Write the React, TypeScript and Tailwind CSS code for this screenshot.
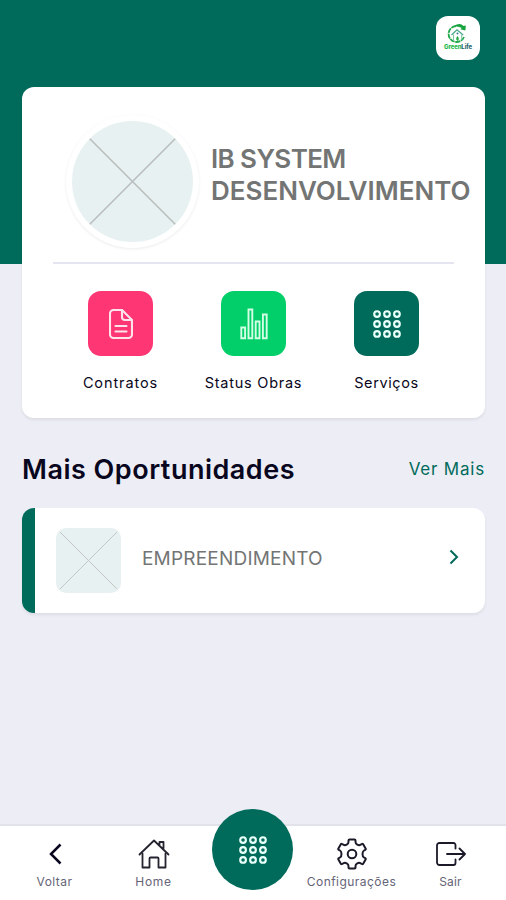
import React from 'react';

function DotsIcon() {
  const steps = [4, 13.8, 23.6];
  return (
    <svg width="28" height="28" viewBox="0 0 27.6 27.6" fill="none" stroke="#e9fffa" strokeWidth="2.1">
      {steps.map((y) => steps.map((x) => <circle key={`${x}-${y}`} cx={x} cy={y} r="2.8" />))}
    </svg>
  );
}

function DocumentIcon() {
  return (
    <svg width="24" height="30" viewBox="0 0 24 30" fill="none" stroke="#ffe3ec" strokeWidth="2.1" strokeLinejoin="round" strokeLinecap="round">
      <path d="M4.5 1H13l10 10v14.5a3.5 3.5 0 0 1-3.5 3.5h-15A3.5 3.5 0 0 1 1 25.5v-21A3.5 3.5 0 0 1 4.5 1Z" />
      <path d="M13 1v7a3 3 0 0 0 3 3h7M6.5 17h11M6.5 22.5h11" />
    </svg>
  );
}

function BarsIcon() {
  return (
    <svg width="28" height="32" viewBox="0 0 28 32" fill="none" stroke="#d2ffe5" strokeWidth="1.9">
      <path d="M1.3 19.5h3.8v10.7H1.3ZM8.5 1.5h3.8v28.7H8.5ZM15.7 13.5h3.8v16.7h-3.8ZM22.9 6.5h3.8v23.7h-3.8Z" />
    </svg>
  );
}

function HomeIcon() {
  return (
    <svg width="32" height="30" viewBox="0 0 32 30" fill="none" stroke="#25232f" strokeWidth="1.8" strokeLinejoin="round" strokeLinecap="round">
      <path d="M1.5 15.5 16 1.5l14.5 14M21.500 5.500V3H25.500v6.500" />
      <path d="M4.5 14.5v14h7v-9a1 1 0 0 1 1-1h7a1 1 0 0 1 1 1v9h7v-14" />
    </svg>
  );
}

function GearIcon() {
  return (
    <svg width="30" height="32" viewBox="0 0 30 32" fill="none" stroke="#1c1a29" strokeWidth="2" strokeLinejoin="round">
      <path d="M12.500 1.500h5q1 0 1 1v1.500q0 1.800 1.800 2.700t3.400 0l1.200-.7q.9-.5 1.400.4l2.300 4q.5.900-.4 1.400l-1.200.7q-1.500.9-1.500 3.500t1.500 3.500l1.200.7q.9.500.4 1.400l-2.300 4q-.5.900-1.400.4l-1.200-.7q-1.600-.9-3.400 0t-1.800 2.700v1.500q0 1-1 1h-5q-1 0-1-1v-1.500q0-1.800-1.800-2.700t-3.400 0l-1.200.7q-.9.500-1.400-.4l-2.300-4q-.5-.9.4-1.400l1.200-.7q1.500-.9 1.500-3.500t-1.500-3.500l-1.200-.7q-.9-.5-.4-1.400l2.300-4q.5-.9 1.400-.4l1.200.7q1.600.9 3.400 0t1.800-2.700v-1.500q0-1 1-1Z" />
      <circle cx="15" cy="16" r="4.3" />
    </svg>
  );
}

function ExitIcon() {
  return (
    <svg width="30" height="24" viewBox="0 0 30 24" fill="none" stroke="#1c1a29" strokeWidth="1.8" strokeLinejoin="round" strokeLinecap="round">
      <path d="M19.5 6.5V3a2 2 0 0 0-2-2h-14A2.5 2.5 0 0 0 1 3.5v17A2.5 2.5 0 0 0 3.5 23h14a2 2 0 0 0 2-2v-3.500" />
      <path d="M11 12h17.500M23.500 6.500 29 12l-5.500 5.500" />
    </svg>
  );
}

function Placeholder({ className, inset }: { className: string; inset: number }) {
  return (
    <div className={className}>
      <svg className="h-full w-full" viewBox="0 0 100 100" fill="none" stroke="#babfbe" strokeWidth="1.3">
        <path d={`M${inset} ${inset}L${100 - inset} ${100 - inset}M${100 - inset} ${inset}L${inset} ${100 - inset}`} />
      </svg>
    </div>
  );
}

function Logo() {
  return (
    <div className="flex h-11 w-11 flex-col items-center rounded-xl bg-white pt-[7px]">
      <svg width="24" height="20" viewBox="0 0 24 20" fill="none">
        <path d="M10 3A8 8 0 1 0 18 14" stroke="#20a94a" strokeWidth="1.8" strokeDasharray="5 .7" />
        <path d="M8 3.2c4-3 7-2.8 9.5-.2l2.3-.6-.4 5.2-5.2-1.4 1.6-1.3C13.5 3.5 11 3.5 8 3.2Z" fill="#15a33c" />
        <path d="m5.500 12 5.500-5.300 6.200 5.300" stroke="#45a886" strokeWidth="1.2" />
        <path d="M7.500 11.500V18M15.700 11.500V17" stroke="#7bc6a2" />
        <circle cx="11.5" cy="10.5" r="1" fill="#3d7c92" />
        <path d="M11.500 13c2 2 1.500 4 0 5-1.500-1-2-3 0-5Z" fill="#27a947" />
      </svg>
      <div className="text-[6px] leading-[8px] font-extrabold tracking-[-0.1px] text-[#1cb84b]">
        Green<span className="text-[#2b6572]">Life</span>
      </div>
    </div>
  );
}

const shortcuts = [
  { label: 'Contratos', color: 'bg-[#ff3674]', track: 'tracking-[0.9px]', icon: <DocumentIcon /> },
  { label: 'Status Obras', color: 'bg-[#02cf69]', track: 'tracking-[0.75px]', icon: <BarsIcon /> },
  { label: 'Serviços', color: 'bg-[#006b5a]', track: 'tracking-[0.6px]', icon: <DotsIcon /> },
];

function NavItem({ label, track, children }: { label: string; track: string; children: React.ReactNode }) {
  return (
    <button className="flex w-[99px] flex-col items-center pt-3">
      <span className="flex h-8 items-center justify-center">{children}</span>
      <span className={`mt-[4px] text-[12px] leading-4 whitespace-nowrap text-[#656477] ${track}`}>{label}</span>
    </button>
  );
}

export default function App() {
  return (
    <div className="flex h-[900px] w-[506px] flex-col overflow-hidden bg-[linear-gradient(#006b5a_264px,#ededf6_264px)] font-['Inter',sans-serif] text-[#090720]">
      <header className="flex h-[87px] shrink-0 justify-end pt-4 pr-[26px]">
        <Logo />
      </header>

      <main className="flex-1 pr-[21px] pl-[22px]">
        {/* Profile card */}
        <section className="h-[331px] rounded-xl bg-white px-[31px] shadow-[0_2px_3px_rgba(0,0,0,0.07)]">
          <div className="flex h-[177px] items-center border-b-2 border-[#e5e5f1] pt-[13px] pl-[13px]">
            <div className="shrink-0 rounded-full bg-white p-[6px] shadow-[0_1px_3px_rgba(0,0,0,0.08)]">
              <Placeholder className="h-[121px] w-[121px] overflow-hidden rounded-full bg-[#e8f1f1]" inset={14.5} />
            </div>
            <h1 className="-mt-[12px] ml-3 text-[26px] leading-8 font-semibold text-[#737574]">
              <span className="block whitespace-nowrap tracking-[-0.6px]">IB SYSTEM</span>
              <span className="block whitespace-nowrap tracking-[0px]">DESENVOLVIMENTO</span>
            </h1>
          </div>
          <div className="ml-px grid w-[399px] grid-cols-3 pt-[27px]">
            {shortcuts.map((item) => (
              <button key={item.label} className="flex flex-col items-center">
                <span className={`flex h-[65px] w-[65px] items-center justify-center rounded-[13px] ${item.color}`}>{item.icon}</span>
                <span className={`mt-[17px] text-[14.5px] leading-5 whitespace-nowrap ${item.track}`}>{item.label}</span>
              </button>
            ))}
          </div>
        </section>

        {/* Opportunities */}
        <div className="flex h-[90px] items-center justify-between pt-[14px]">
          <h2 className="text-[27px] leading-8 font-semibold tracking-[0.5px] whitespace-nowrap">Mais Oportunidades</h2>
          <a className="-mt-[2px] text-[17px] leading-6 tracking-[0.8px] whitespace-nowrap text-[#006b5a]">Ver Mais</a>
        </div>
        <section className="flex h-[105px] items-center rounded-xl border-l-[13px] border-[#006b5a] bg-white pr-[26px] pl-[21px] shadow-[0_2px_3px_rgba(0,0,0,0.07)]">
          <Placeholder className="h-[65px] w-[65px] overflow-hidden rounded-[10px] bg-[#e8f1f1]" inset={6} />
          <span className="-mt-[3px] ml-[21px] flex-1 text-[19px] tracking-[0.2px] text-[#737574]">EMPREENDIMENTO</span>
          <svg className="-mt-[7px]" width="10" height="16" viewBox="0 0 10 16" fill="none" stroke="#006b5a" strokeWidth="2">
            <path d="m1.500 1.500 6.500 6.500-6.500 6.500" />
          </svg>
        </section>
      </main>

      {/* Bottom navigation */}
      <nav className="flex h-[76px] shrink-0 border-t-2 border-[#e2e2eb] bg-white pl-[5px]">
        <NavItem label="Voltar" track="tracking-[0.45px]">
          <svg width="14" height="22" viewBox="0 0 14 22" fill="none" stroke="#090720" strokeWidth="2.5">
            <path d="M12.500 1.500 3 11l9.500 9.500" />
          </svg>
        </NavItem>
        <NavItem label="Home" track="tracking-[0.7px]">
          <HomeIcon />
        </NavItem>
        <div className="-mt-[17px] flex w-[99px] justify-center">
          <button className="flex h-[81px] w-[81px] items-center justify-center rounded-full bg-[#006b5a]">
            <DotsIcon />
          </button>
        </div>
        <NavItem label="Configurações" track="tracking-[0.45px]">
          <GearIcon />
        </NavItem>
        <NavItem label="Sair" track="tracking-[0.2px]">
          <ExitIcon />
        </NavItem>
      </nav>
    </div>
  );
}
